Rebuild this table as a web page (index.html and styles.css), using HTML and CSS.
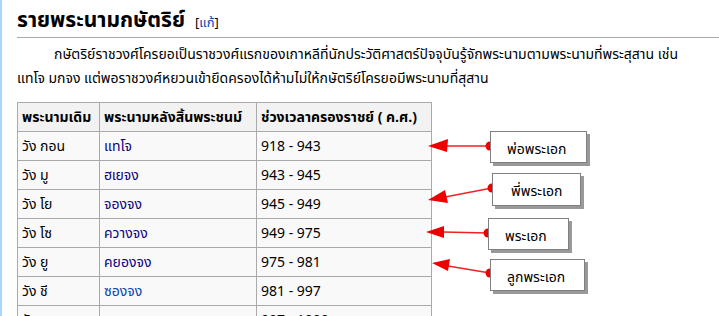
FILE: index.html
```html
<!DOCTYPE html>
<html lang="th">
<head>
<meta charset="utf-8">
<title>รายพระนามกษัตริย์</title>
<link rel="stylesheet" href="styles.css">
</head>
<body>
<div class="page">
  <h2 class="heading"><span class="headline">รายพระนามกษัตริย์</span><span class="edit">[<a href="#">แก้</a>]</span></h2>
  <p class="intro"><span class="line">กษัตริย์ราชวงศ์โครยอเป็นราชวงศ์แรกของเกาหลีที่นักประวัติศาสตร์ปัจจุบันรู้จักพระนามตามพระนามที่พระสุสาน เช่น</span><span class="line">แทโจ มกจง แต่พอราชวงศ์หยวนเข้ายึดครองได้ห้ามไม่ให้กษัตริย์โครยอมีพระนามที่สุสาน</span></p>
  <table class="kings">
    <tr><th class="c1">พระนามเดิม</th><th class="c2">พระนามหลังสิ้นพระชนม์</th><th class="c3">ช่วงเวลาครองราชย์ ( ค.ศ.)</th></tr>
    <tr><td>วัง กอน</td><td><a class="visited" href="#">แทโจ</a></td><td>918 - 943</td></tr>
    <tr><td>วัง มู</td><td><a class="visited" href="#">ฮเยจง</a></td><td>943 - 945</td></tr>
    <tr><td>วัง โย</td><td><a class="visited" href="#">จองจง</a></td><td>945 - 949</td></tr>
    <tr><td>วัง โซ</td><td><a class="visited" href="#">ควางจง</a></td><td>949 - 975</td></tr>
    <tr><td>วัง ยู</td><td><a class="visited" href="#">คยองจง</a></td><td>975 - 981</td></tr>
    <tr><td>วัง ชี</td><td><a href="#">ซองจง</a></td><td>981 - 997</td></tr>
    <tr><td>วัง ซง</td><td><a href="#">มกจง</a></td><td>997 - 1009</td></tr>
  </table>

  <div class="notes">
    <svg class="arrows" width="719" height="316" viewBox="0 0 719 316">
      <g stroke="#ee2222" stroke-width="1.3" fill="none">
        <line x1="490" y1="146" x2="445" y2="146"/>
        <line x1="492" y1="188" x2="445" y2="197"/>
        <line x1="488" y1="233" x2="443" y2="232"/>
        <line x1="490" y1="273" x2="448" y2="266"/>
      </g>
      <g fill="#ee0000">
        <polygon points="428,146 448,139 447,152"/>
        <polygon points="428,200 445,190 448,203"/>
        <polygon points="426,232 444,226 444,238"/>
        <polygon points="432,263 450,259 448,271"/>
        <circle cx="490" cy="146" r="4.5"/>
        <circle cx="492" cy="188" r="4.5"/>
        <circle cx="488" cy="233" r="4.5"/>
        <circle cx="490" cy="273" r="4.5"/>
      </g>
    </svg>
    <div class="note n1">พ่อพระเอก</div>
    <div class="note n2">พี่พระเอก</div>
    <div class="note n3">พระเอก</div>
    <div class="note n4">ลูกพระเอก</div>
  </div>
</div>
</body>
</html>
```
FILE: styles.css
```css
html, body {
  margin: 0;
  padding: 0;
  background: #ffffff;
}
body {
  font-family: Tahoma, "Noto Sans Thai", "DejaVu Sans", "Noto Sans", sans-serif;
  color: #000000;
  font-size: 14px;
  overflow: hidden;
  width: 719px;
  height: 316px;
}
.page {
  position: relative;
  border-left: 2px solid #a7d7f9;
  padding-left: 15px;
  height: 316px;
  box-sizing: border-box;
}
.heading {
  margin: 0;
  padding-top: 7px;
  padding-bottom: 0;
  border-bottom: 1px solid #aaaaaa;
  font-size: 21px;
  font-weight: bold;
  line-height: 27px;
  display: flex;
  align-items: baseline;
}
.edit {
  font-size: 13px;
  font-weight: normal;
  margin-left: 10px;
  color: #000;
}
a {
  color: #0645ad;
  text-decoration: none;
}
a.visited {
  color: #0b0080;
}
.intro {
  margin: 5px 0 0 0;
  line-height: 24px;
}
.intro .line {
  display: block;
  white-space: nowrap;
}
.intro .line:first-child {
  padding-left: 37px;
}
.kings {
  margin-top: 11px;
  border-collapse: collapse;
  background: #f9f9f9;
  border: 1px solid #aaaaaa;
}
.kings th, .kings td {
  border: 1px solid #aaaaaa;
  height: 29px;
  padding: 0 4px;
  text-align: left;
  white-space: nowrap;
  box-sizing: border-box;
}
.kings th {
  background: #f2f2f2;
  font-weight: bold;
}
.kings .c1 { width: 82px; }
.kings .c2 { width: 157px; }
.kings .c3 { width: 175px; }
.notes {
  position: absolute;
  left: -2px;
  top: 0;
  width: 719px;
  height: 316px;
  pointer-events: none;
}
.arrows {
  position: absolute;
  left: 0;
  top: 0;
}
.note {
  position: absolute;
  background: #ffffff;
  border: 1px solid #808080;
  box-shadow: 3px 3px 0 #999999;
  box-sizing: border-box;
  font-size: 14px;
  padding-left: 16px;
  display: flex;
  align-items: center;
  padding-top: 4px;
}
.n1 { left: 490px; top: 131px; width: 97px; height: 32px; }
.n2 { left: 492px; top: 173px; width: 89px; height: 33px; padding-left: 18px; }
.n3 { left: 488px; top: 218px; width: 81px; height: 32px; }
.n4 { left: 490px; top: 259px; width: 95px; height: 32px; }
```
